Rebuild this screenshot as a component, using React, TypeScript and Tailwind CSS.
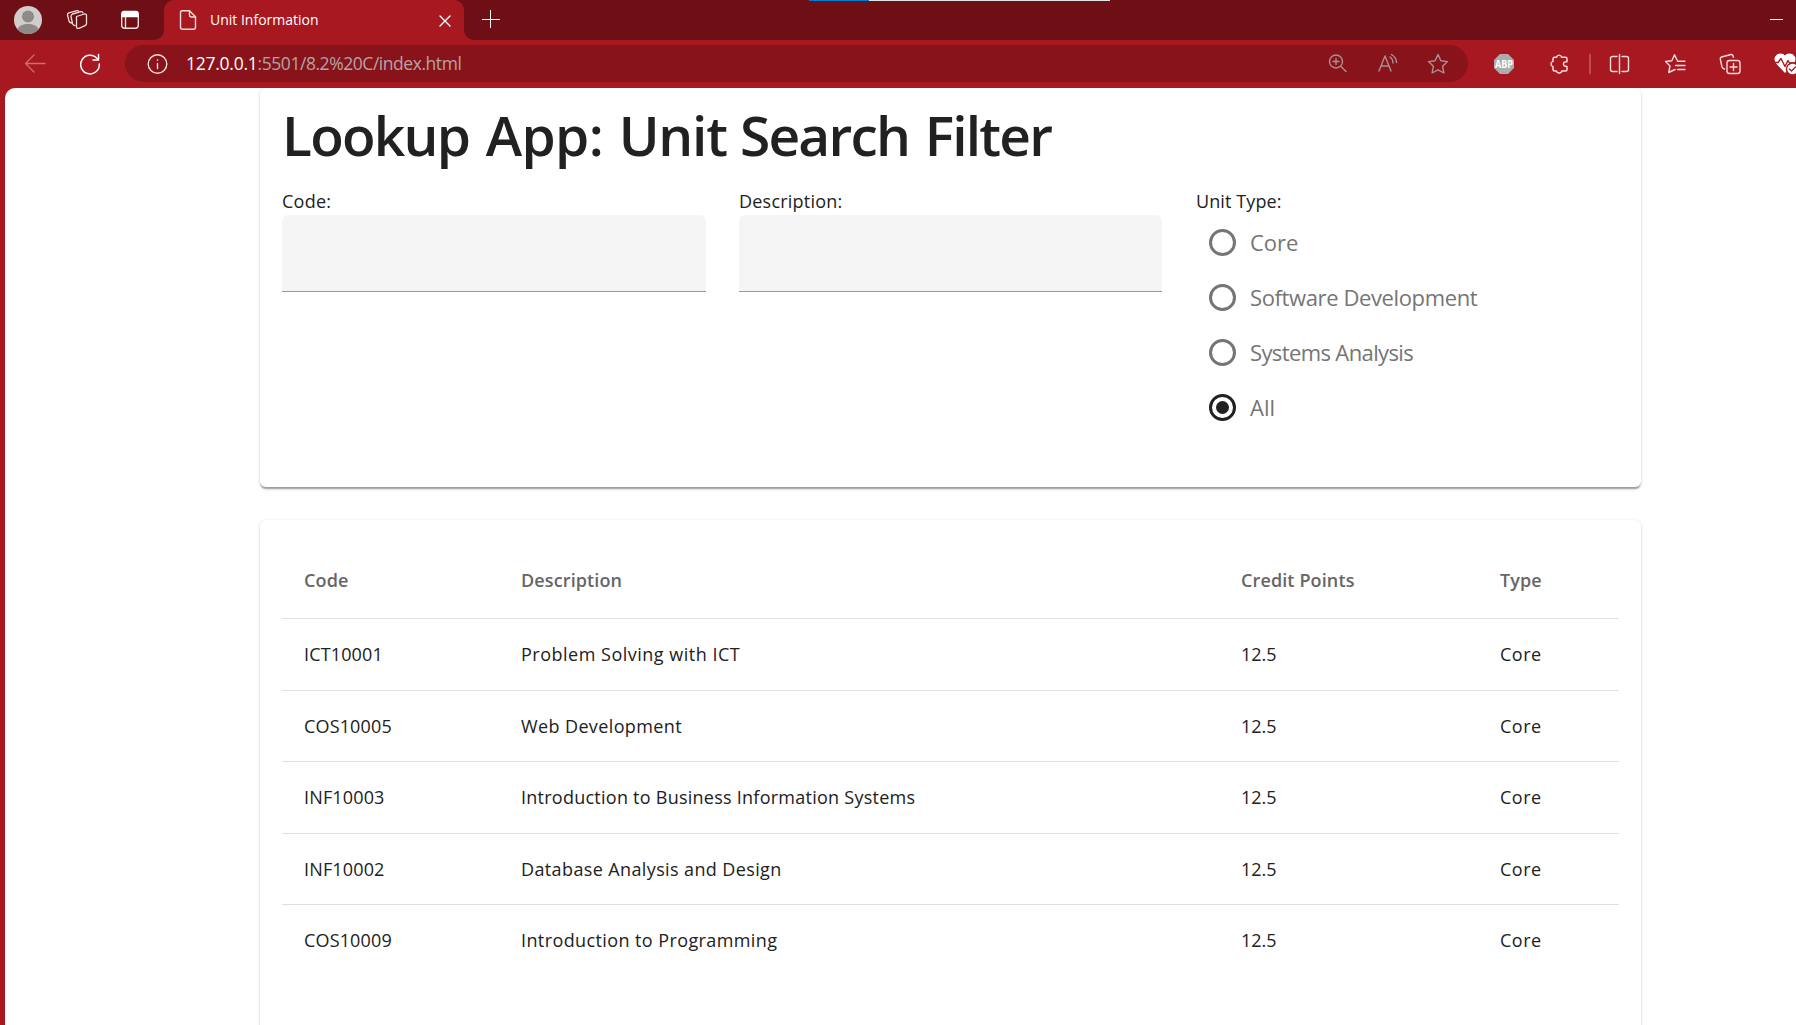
import type { ReactNode } from "react";

function T({ children, className = "" }: { children: ReactNode; className?: string }) {
  return <span className={`whitespace-nowrap ${className}`}>{children}</span>;
}

function Icon({ children, className = "", size = 22, w = 1.3 }: { children: ReactNode; className?: string; size?: number; w?: number }) {
  return (
    <svg
      width={size}
      height={size}
      viewBox={`0 0 ${size} ${size}`}
      fill="none"
      stroke="currentColor"
      strokeWidth={w}
      strokeLinecap="round"
      strokeLinejoin="round"
      className={`shrink-0 ${className}`}
    >
      {children}
    </svg>
  );
}

function TabStrip() {
  return (
    <div className="flex h-10 w-full items-start overflow-hidden bg-[#6d0f15] text-[#f0dede]">
      <svg width="28" height="28" viewBox="0 0 28 28" className="mt-1.5 ml-3.5 shrink-0">
        <circle cx="14" cy="14" r="14" fill="#d0cdca" />
        <circle cx="14" cy="10.5" r="6" fill="#8d8a87" />
        <path d="M3.5 23.2C5 19.5 9 18 14 18s9 1.5 10.500 5.200A14 14 0 0 1 14 28 14 14 0 0 1 3.500 23.200Z" fill="#8d8a87" />
      </svg>
      <Icon className="mt-[9px] ml-6">
        <path d="M10.500 7.500 18.500 5q2-.4 2 1.600v8q0 1.500-1.500 2l-6 2.700q-2.200.7-2.500-1.500Z" />
        <path d="M9 16.500q-2 0-2.500-2L5 7.500q-.2-1.800 1.500-2.500L15 2.700q1.500-.3 2 1.300" />
        <path d="M5.500 14q-2-.3-2.500-2L1.500 6q-.2-1.500 1.300-2.100L11 1.600q1-.2 1.600.6" />
      </Icon>
      <Icon className="mt-[9px] ml-[31px]" w={1.4}>
        <rect x="2.700" y="3" width="16.600" height="16.300" rx="3" />
        <path d="M3 4.500Q3 2.500 5 2.500h12q2 0 2 2v3H3Z" fill="white" stroke="white" />
        <path d="M6.500 8v11" />
      </Icon>
      <div className="ml-[13px] h-10 w-[10px] bg-[#a81820]">
        <div className="h-10 w-full rounded-br-[10px] bg-[#6d0f15]" />
      </div>
      <div className="h-10 w-[300px] bg-[#6d0f15]">
        <div className="flex h-10 rounded-t-[10px] bg-[#a81820]">
          <Icon className="mt-[9px] ml-[13px]" w={1.4}>
            <path d="M5 1.700h7.500l6 6v10.600q0 2-2 2H5.500q-2 0-2-2V3.700q0-2 1.500-2Z" />
            <path d="M12.500 2v4q0 2 2 2h4" />
          </Icon>
          <T className="mt-[9px] ml-[11px] text-[14px] leading-[22px] text-white">Unit Information</T>
          <div className="flex-1" />
          <Icon size={12} className="mt-[15px] mr-[13.500px] text-white" w={1.4}>
            <path d="M1 1 11 11M11 1 1 11" />
          </Icon>
        </div>
      </div>
      <div className="h-10 w-[10px] bg-[#a81820]">
        <div className="h-10 w-full rounded-bl-[10px] bg-[#6d0f15]" />
      </div>
      <Icon size={18} className="mt-[10px] ml-[8px] text-white" w={1}>
        <path d="M8.500 .5v17M0 9.500h17.500" />
      </Icon>
      <div className="ml-[309px] flex h-px">
        <div className="w-[60px] bg-[#0078d4]" />
        <div className="w-[241px] bg-[#e3e3e3]" />
      </div>
      <div className="mt-[19px] ml-[660px] h-px w-[13px] shrink-0 bg-white" />
    </div>
  );
}

function Toolbar() {
  return (
    <div className="flex h-12 w-full items-center overflow-hidden bg-[#a81820] text-[#f4dcdd]">
      <Icon className="ml-6 text-[#cf6c72]">
        <path d="M21 10.500H1.500M10 2 1.500 10.500 10 19" />
      </Icon>
      <Icon className="ml-[33px] text-white" w={1.5}>
        <path d="M18.300 5.800A9.300 9.300 0 1 0 20.300 11" />
        <path d="M19.500 1.500v5.500h-5.500" />
      </Icon>
      <div className="-mt-px ml-6 flex h-[37px] w-[1343px] shrink-0 items-center rounded-full bg-[#88131b] text-[#ab9093]">
        <Icon className="ml-[22px] text-[#f4dcdd]" w={1.4}>
          <circle cx="10.500" cy="11" r="9.300" />
          <path d="M10.500 10.500v5M10.500 7v.2" />
        </Icon>
        <T className="ml-[17px] text-[17.500px] tracking-[-0.25px] text-white">127.0.0.1</T>
        <T className="text-[17.500px] tracking-[-0.45px] text-[#b5a3a4]">:5501/8.2%20C/index.html</T>
        <div className="flex-1" />
        <Icon w={1.4}>
          <circle cx="9" cy="8.500" r="6.500" />
          <path d="M14 13.500 19 18.500M9 5.500v6M6 8.500h6" />
        </Icon>
        <Icon className="ml-[28px]" w={1.4}>
          <path d="M2 18 8 3 14 18M4 13h8M13 4q3 2 3 6M14.500 1.500q5 3 5 8" />
        </Icon>
        <Icon className="mr-[19px] ml-[28px]" w={1.4}>
          <path d="m11 1.500 2.900 6.300 6.600.8-4.900 4.700 1.300 6.700L11 16.800 5.100 20l1.300-6.700L1.500 8.600l6.600-.8Z" />
        </Icon>
      </div>
      <svg width="28" height="20" viewBox="-4 0 28 20" className="ml-[22px] shrink-0">
        <path d="M6 0h8l6 6v8l-6 6H6l-6-6V6Z" fill="#adadad" />
        <text x="1" y="14" fontSize="11" fontWeight="700" textLength="18" lengthAdjust="spacingAndGlyphs" fill="white">ABP</text>
      </svg>
      <Icon className="ml-[30px]" w={1.5}>
        <path d="M8.500 4.300a2.700 2.700 0 0 1 5.200 0h3.800q1.500 0 1.500 1.500v3q-3.500-.3-3.500 2.200t3.500 2.400v3q0 1.500-1.500 1.500h-3.700a2.700 2.700 0 0 1-5.300 0H6.500q-1.500 0-1.500-1.500v-2.800a2.700 2.700 0 0 1 0-5.200V5.800q0-1.500 1.500-1.500Z" />
      </Icon>
      <div className="ml-[19px] h-5 w-[2px] shrink-0 bg-[#c04a51]" />
      <Icon className="ml-[18px]" w={1.4}>
        <path d="M8 3.500H3.500q-2 0-2 2v11q0 2 2 2H8M13 3.500h4.500q2 0 2 2v11q0 2-2 2H13M10.500 1.500v19" />
      </Icon>
      <Icon className="ml-[33px]" w={1.4}>
        <path d="M13 7 10.500 1.800 7.800 7.700 1.500 8.500 6 13 4.700 19.500 11 16.500M13.500 8.200H21M11.500 12.500H21M13.500 16.500H21" />
      </Icon>
      <Icon className="ml-[33px]" w={1.4}>
        <rect x="8" y="7.500" width="13" height="13" rx="2.500" />
        <path d="M14.500 10.500v7M11 14h7M5.500 16q-2-.5-2.500-2L1.300 6q-.2-1.500 1.200-2L12 1.500q1.500-.2 2 1.300l.4 1.400" />
      </Icon>
      <Icon className="ml-[33px]" size={24} w={1.4}>
        <path d="M11 20 2.500 11Q-.5 6 3.500 3 8 1 11 4.500 14 1 18.500 3q4 3 1 8Z" fill="white" stroke="white" />
        <path d="M0 10.500h4L7 6.500l4 8 3-6 1.500 2.500H22" stroke="#a81820" />
        <circle cx="18.500" cy="17" r="6" fill="white" stroke="#a81820" />
        <path d="m15.500 17 2 2 4-4" stroke="#a81820" />
      </Icon>
    </div>
  );
}

const units = [
  { code: "ICT10001", name: "Problem Solving with ICT", gap: "tracking-[0.5px]", h: "h-[72px]" },
  { code: "COS10005", name: "Web Development", gap: "tracking-[0.38px]", h: "h-[71px]" },
  { code: "INF10003", name: "Introduction to Business Information Systems", gap: "tracking-[0.25px]", h: "h-[72px]" },
  { code: "INF10002", name: "Database Analysis and Design", gap: "tracking-[0.38px]", h: "h-[71px]" },
  { code: "COS10009", name: "Introduction to Programming", gap: "tracking-[0.4px]", h: "h-[72px]" },
];

const types = [
  { label: "Core", gap: "" },
  { label: "Software Development", gap: "tracking-[-0.38px]" },
  { label: "Systems Analysis", gap: "tracking-[-0.62px]" },
  { label: "All", gap: "" },
];

const cardShadow =
  "shadow-[0_2.75px_1.375px_-1.375px_rgba(0,0,0,0.2),0_1.375px_1.375px_0_rgba(0,0,0,0.14),0_1.375px_4px_0_rgba(0,0,0,0.12)]";

function Filter() {
  return (
    <div className={`h-[399px] rounded-[6px] bg-white pl-[22px] ${cardShadow}`}>
      <h1 className="pt-[9px] text-[55px] leading-[75px] font-semibold tracking-[-1.18px]">
        <T className="tracking-[-1.75px]">Lookup</T> <T className="ml-[3.4px] tracking-[-0.6px]">App:</T>{" "}
        <T className="ml-[2.3px]">Unit</T> <T className="tracking-[-1.75px]">Search</T>{" "}
        <T className="ml-[2.3px] tracking-[-1.75px]">Filter</T>
      </h1>
      <div className="mt-[16px] grid grid-cols-[424px_423px_424px] gap-x-[33px] text-[18px] leading-[27px]">
        <div>
          <T className="block w-fit tracking-[0.25px]">Code:</T>
          <div className="h-[77px] rounded-t-[6px] border-b border-[#9a9a9a] bg-[#f5f5f5]" />
        </div>
        <div>
          <T className="block w-fit tracking-[0.22px]">Description:</T>
          <div className="h-[77px] rounded-t-[6px] border-b border-[#9a9a9a] bg-[#f5f5f5]" />
        </div>
        <div>
          <T className="block w-fit pl-px tracking-[0.1px]">Unit Type:</T>
          {types.map(({ label, gap }) => (
            <div key={label} className="flex h-[55px] items-center pl-[14px] text-[22px] text-[#757575]">
              <div className={`flex size-[27px] items-center justify-center rounded-full border-[3px] ${label === "All" ? "border-[#212121]" : "border-[#757575]"}`}>
                {label === "All" && <div className="size-[13px] rounded-full bg-[#212121]" />}
              </div>
              <T className={`ml-[14px] ${gap}`}>{label}</T>
            </div>
          ))}
        </div>
      </div>
    </div>
  );
}

const cols = "grid grid-cols-[217px_720px_259px_1fr] pl-[22px]";

function Units() {
  return (
    <div className={`mt-[33px] h-[520px] rounded-t-[6px] bg-white px-[22px] pt-[22px] text-[18px] leading-[27px] ${cardShadow}`}>
      <div className={`${cols} h-[77px] items-center border-b border-[#e0e0e0] font-semibold tracking-[0.12px] text-[#666]`}>
        <T>Code</T>
        <T>Description</T>
        <T>Credit Points</T>
        <T>Type</T>
      </div>
      {units.map(({ code, name, gap, h }) => (
        <div key={code} className={`${cols} ${h} items-start border-b border-[#e0e0e0] pt-[22px] last:border-0`}>
          <T className="tracking-[0.15px]">{code}</T>
          <T className={gap}>{name}</T>
          <T>12.5</T>
          <T className="tracking-[0.5px]">Core</T>
        </div>
      ))}
    </div>
  );
}

export default function App() {
  return (
    <div className="h-[1025px] w-[1796px] overflow-hidden bg-[#a81820] font-['Open_Sans',sans-serif] text-[#212121]">
      <TabStrip />
      <Toolbar />
      <div className="ml-[5px] h-[937px] overflow-hidden rounded-tl-[10px] bg-white">
        <div className="ml-[255px] w-[1381px]">
          <Filter />
          <Units />
        </div>
      </div>
    </div>
  );
}
